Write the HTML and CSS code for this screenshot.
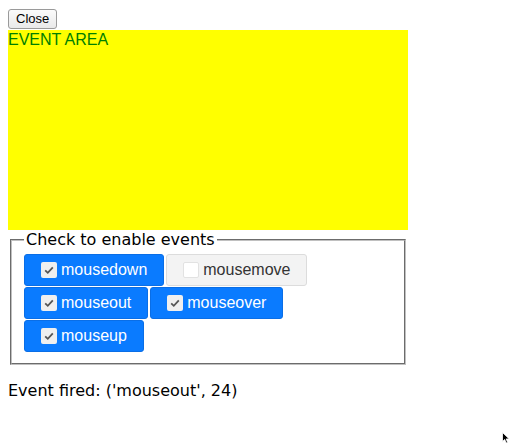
FILE: index.html
```html
<!DOCTYPE html>
<html>
<head>
<meta charset="utf-8">
<link rel="stylesheet" href="styles.css">
</head>
<body>
<div class="app">
  <div class="topbar"><button class="close-btn">Close</button></div>
  <div class="event-area">EVENT AREA</div>
  <fieldset class="events">
    <legend class="events-legend">Check to enable events</legend>
    <div class="toggles">
      <button class="toggle on"><span class="box"><svg viewBox="0 0 16 16" width="16" height="16"><path d="M4.2 8.3 L6.8 10.8 L11.8 5.4" fill="none" stroke="#555" stroke-width="1.8"/></svg></span>mousedown</button>
      <button class="toggle off"><span class="box"></span>mousemove</button>
      <button class="toggle on"><span class="box"><svg viewBox="0 0 16 16" width="16" height="16"><path d="M4.2 8.3 L6.8 10.8 L11.8 5.4" fill="none" stroke="#555" stroke-width="1.8"/></svg></span>mouseout</button>
      <button class="toggle on"><span class="box"><svg viewBox="0 0 16 16" width="16" height="16"><path d="M4.2 8.3 L6.8 10.8 L11.8 5.4" fill="none" stroke="#555" stroke-width="1.8"/></svg></span>mouseover</button>
      <button class="toggle on"><span class="box"><svg viewBox="0 0 16 16" width="16" height="16"><path d="M4.2 8.3 L6.8 10.8 L11.8 5.4" fill="none" stroke="#555" stroke-width="1.8"/></svg></span>mouseup</button>
    </div>
  </fieldset>
  <p class="status">Event fired: ('mouseout', 24)</p>
</div>
<svg class="cursor" viewBox="0 0 8 12" width="8" height="12"><path d="M0.5 0.5 L0.5 9.5 L2.7 7.4 L4.2 11 L5.6 10.4 L4.2 6.9 L7.2 6.9 Z" fill="#000" stroke="#fff" stroke-width="0.8"/></svg>
</body>
</html>
```

FILE: styles.css
```css
html, body {
  margin: 0;
  padding: 0;
  background: #fff;
}
body {
  margin: 8px;
  font-family: "DejaVu Sans", Verdana, sans-serif;
  font-size: 16px;
  color: #000;
}
.app {
  width: 400px;
}
.topbar {
  height: 22px;
  display: flex;
  align-items: center;
}
.close-btn {
  font-family: "Liberation Sans", Arial, sans-serif;
  font-size: 13px;
  line-height: 16px;
  height: 20px;
  padding: 1px 7px;
  margin: 0;
  border: 1px solid #9a9a9a;
  border-radius: 3px;
  background: linear-gradient(#fbfbfb, #e9e9e9);
  color: #000;
}
.event-area {
  width: 400px;
  height: 200px;
  background: #ffff00;
  color: #008000;
  font-family: "Liberation Sans", Arial, sans-serif;
  font-size: 16px;
  line-height: 20px;
}
.events {
  margin: 0 2px;
  border: 2px groove #c0c0c0;
  padding: 5px 12px 11px;
  font-size: 16px;
}
.events-legend {
  padding: 0 2px;
  font-family: "DejaVu Sans", Verdana, sans-serif;
  font-size: 16px;
  line-height: 19px;
}
.toggles {
  display: flex;
  flex-wrap: wrap;
  gap: 1px 2px;
}
.toggle {
  display: flex;
  align-items: center;
  height: 32px;
  margin: 0;
  padding: 0 16px;
  border-radius: 3px;
  font-family: "Liberation Sans", Arial, sans-serif;
  font-size: 16px;
  line-height: 18px;
}
.toggle.on {
  background: #0a7bff;
  border: 1px solid #0a6ee6;
  color: #fff;
}
.toggle.off {
  background: #f3f3f3;
  border: 1px solid #dcdcdc;
  color: #333;
}
.box {
  width: 16px;
  height: 16px;
  border-radius: 2px;
  margin-right: 4px;
  box-sizing: border-box;
  display: flex;
}
.toggle.on .box {
  background: #efefef;
}
.toggle.off .box {
  background: #fff;
  border: 1px solid #e2e2e2;
}
.status {
  margin: 16px 0;
  font-size: 16px;
  line-height: 19px;
}
.cursor {
  position: absolute;
  left: 502px;
  top: 432px;
}
```
